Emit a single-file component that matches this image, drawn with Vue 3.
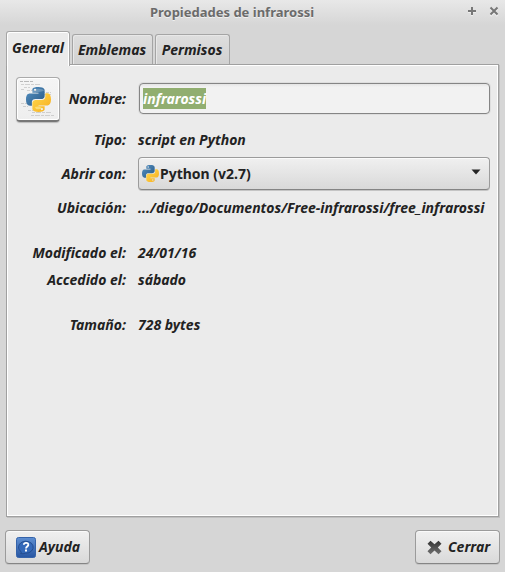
<script setup>
const tabs = ['General', 'Emblemas', 'Permisos']
const details = [
  { id: 'location', label: 'Ubicación:', value: '.../diego/Documentos/Free-infrarossi/free_infrarossi' },
  { id: 'modified', label: 'Modificado el:', value: '24/01/16' },
  { id: 'accessed', label: 'Accedido el:', value: 'sábado' },
  { id: 'size', label: 'Tamaño:', value: '728 bytes' },
]
</script>

<template>
  <svg class="defs" width="0" height="0">
    <defs>
      <linearGradient id="pyBlue" x1="0" y1="0" x2="1" y2="1">
        <stop offset="0" stop-color="#5593c5" /><stop offset="1" stop-color="#285783" />
      </linearGradient>
      <linearGradient id="pyYellow" x1="0" y1="0" x2="1" y2="1">
        <stop offset="0" stop-color="#ffda50" /><stop offset="1" stop-color="#f7ad1d" />
      </linearGradient>
      <symbol id="python" viewBox="0 0 110 110">
        <path fill="url(#pyBlue)" d="M54 0C26 0 28 12 28 12v13h27v4H17S0 27 0 55s16 27 16 27h10V68s-1-15 15-15h26s15 0 15-15V15S84 0 54 0zM40 8a5 5 0 1 1 0 10 5 5 0 0 1 0-10z" />
        <path fill="url(#pyYellow)" d="M56 110c28 0 26-12 26-12V85H55v-4h38s17 2 17-26-16-27-16-27H85v14s1 15-15 15H43s-15 0-15 15v23s-2 15 28 15zM70 102a5 5 0 1 1 0-10 5 5 0 0 1 0 10z" />
      </symbol>
    </defs>
  </svg>
  <main class="window">
    <header class="titlebar">
      <h1>Propiedades de infrarossi</h1>
      <svg class="controls" width="32" height="12" viewBox="0 0 32 12">
        <path d="M1 7h8M5 3v8M23.5 4l7 7M30.5 4l-7 7" class="shine" />
        <path d="M1 6h8M5 2v8M23.5 2.5l7 7M30.5 2.5l-7 7" />
      </svg>
    </header>
    <nav class="tabs">
      <button v-for="(tab, i) in tabs" :key="tab" class="tab" :class="{ active: i === 0 }"><span>{{ tab }}</span></button>
    </nav>
    <section class="panel">
      <div class="name-row">
        <div class="file-icon">
          <svg width="44" height="44" viewBox="0 0 44 44">
            <g stroke="#aaa" stroke-width=".8" opacity=".6">
              <path d="M4 4.5h13" stroke="#777" stroke-dasharray="3 1 5 1" />
              <path d="M5 7.5h19M8 10.5h6M11 13.5h14M20 15.5h15M22 17.5h13M5 12.5h3M5 26.5h8M7 29.5h5M12 33.5h7M16 35.5h20M15 38.5h24" stroke-dasharray="3 1 5 1" />
            </g>
            <use href="#python" x="10" y="10" width="25" height="25" />
            <path d="M14.5 15.5q2-4 8-3.8 5 0 5.5 2-5 2-13.5 1.800z" fill="#fff" opacity=".22" />
            <path d="M19 30q4-1.500 7 1-2 2-6 1z" fill="#fff4a8" opacity=".55" />
          </svg>
        </div>
        <label class="label">Nombre:</label>
        <div class="entry"><span class="selection">infrarossi</span></div>
      </div>
      <div class="row type"><span class="label">Tipo:</span><span class="value">script en Python</span></div>
      <div class="row open">
        <span class="label">Abrir con:</span>
        <button class="combo">
          <svg width="17" height="17"><use href="#python" width="17" height="17" /></svg>
          <span class="app">Python (v2.7)</span>
          <svg class="arrow" width="10" height="6" viewBox="0 0 10 6"><path d="M.5.5h9L5 5.5z" fill="#252525" /></svg>
        </button>
      </div>
      <div v-for="row in details" :key="row.id" class="row" :class="row.id">
        <span class="label">{{ row.label }}</span><span class="value">{{ row.value }}</span>
      </div>
    </section>
    <footer class="actions">
      <button class="action help">
        <svg width="20" height="21" viewBox="0 0 20 21">
          <defs><linearGradient id="help" x1="0" y1="0" x2="0" y2="1"><stop offset="0" stop-color="#5e8fd2" /><stop offset="1" stop-color="#2856a2" /></linearGradient></defs>
          <rect x=".5" y=".5" width="19" height="20" rx="2" fill="url(#help)" stroke="#3563aa" />
          <path d="M4.500 16.500Q5.500 16 5.200 14.800A7.300 6 0 1 1 9.500 16.200Q7 17.200 4.500 16.500z" fill="#3469b9" stroke="#234d91" />
          <path d="M7.800 7.700C8 5.100 12.700 5.200 12.300 8c-.2 1.400-2.300 1.600-2.300 3.400" fill="none" stroke="#fff" stroke-width="1.800" />
          <rect x="9" y="12.500" width="2" height="2" fill="#fff" />
        </svg>
        <span>Ayuda</span>
      </button>
      <button class="action close">
        <svg width="15" height="15" viewBox="0 0 15 15">
          <defs><linearGradient id="cross" x1="0" y1="0" x2="0" y2="1"><stop offset="0" stop-color="#333" /><stop offset="1" stop-color="#707070" /></linearGradient></defs>
          <path d="M3.500.7 7.500 4.200 11.500.7 14.500 3.700 10.800 7.400 14.500 11.200 11.500 14.200 7.500 10.600 3.500 14.200.5 11.200 4.200 7.400.5 3.700z" fill="url(#cross)" />
        </svg>
        <span>Cerrar</span>
      </button>
    </footer>
  </main>
</template>

<style>
body { margin: 0; background: #d6d6d6; }
</style>

<style scoped>
* { box-sizing: border-box; }
.defs { position: absolute; }
.window {
  width: 505px; height: 572px; padding: 0 6px;
  display: flex; flex-direction: column;
  background: linear-gradient(#e8e8e8, #d6d6d6 25px);
  font: italic bold 14px/20px "Noto Sans", sans-serif;
  color: #222; white-space: nowrap; overflow: hidden;
}
button { font: inherit; color: inherit; padding: 0; margin: 0; border: 0; background: none; }
span { display: block; }
.titlebar { height: 31px; flex: none; display: grid; grid-template-columns: 32px 1fr 32px; padding-top: 3px; }
h1 { grid-column: 2; margin: -1px 0 0 -41px; text-align: center; font: bold 13px/20px "Noto Sans", sans-serif; color: #6b6b6b; text-shadow: 0 1px #f0f0f0; }
.controls { margin: 2px 0 0; fill: none; stroke: #777; stroke-width: 2; }
.controls .shine { stroke: #eee; }
.tabs { height: 33px; flex: none; display: flex; align-items: flex-end; gap: 2px; }
.tab {
  height: 30px; width: 75px; display: flex; justify-content: center; align-items: flex-start; padding: 5px 1px 0 0;
  border: 1px solid #a5a5a5; border-bottom: 0; border-radius: 3px 3px 0 0;
  background: linear-gradient(#dedede, #d1d1d1); box-shadow: inset 1px 1px #e8e8e8;
}
.tab:nth-child(2) { width: 81px; }
.tab.active {
  z-index: 1; width: 64px; height: 35px; margin-bottom: -2px; padding: 6px 0 0;
  background: #ebebeb; box-shadow: inset 1px 1px #fff, inset -1px 0 #fff;
}
.panel { height: 453px; flex: none; padding: 12px 8px 0 9px; border: 1px solid #a0a0a0; background: #ebebeb; box-shadow: inset 0 0 0 1px #fff, 1px 1px #bfbfbf; }
.name-row { display: flex; align-items: flex-start; height: 45px; }
.file-icon { width: 44px; height: 45px; border: 1px solid #aaa; border-bottom: 2px solid #777; border-radius: 4px; background: linear-gradient(#f5f5f5, #eee); box-shadow: inset 0 0 0 1px #fff, 0 1px 1px #bbb; overflow: hidden; }
.file-icon svg { display: block; margin: -1px; }
.name-row .label { width: 66px; margin-top: 12px; }
.label { text-align: right; }
.entry { flex: 1; margin: 6px 0 0 13px; height: 31px; border: 1px solid #858585; border-radius: 4px; background: linear-gradient(#e4e4e4, #f2f2f2 3px); padding: 4px 3px; box-shadow: 0 0 0 1px #dedede; }
.selection { width: 63px; height: 21px; line-height: 21px; background: #91ae70; color: #fff; }
.row { display: grid; grid-template-columns: 110px 1fr; column-gap: 12px; height: 20px; align-items: center; }
.type { margin-top: 8px; }
.open { margin-top: 6px; height: 35px; }
.location { margin-top: 7px; }
.modified { margin-top: 25px; }
.accessed { margin-top: 7px; }
.size { margin-top: 25px; }
.combo, .action { border: 1px solid #9b9b9b; border-bottom-color: #858585; border-radius: 4px; background: linear-gradient(#f0f0f0, #d9d9d9); box-shadow: inset 0 1px #fafafa, 0 1px #c4c4c4; }
.combo { height: 33px; display: flex; align-items: center; padding: 0 8px 0 3px; font-style: normal; }
.combo .app { margin-left: 1px; }
.arrow { margin-left: auto; margin-top: -3px; }
.actions { display: flex; justify-content: space-between; margin: 13px -1px 0; }
.action { height: 34px; display: flex; align-items: center; }
.help { width: 85px; padding-left: 10px; gap: 3px; }
.close { width: 85px; padding-left: 11px; gap: 6px; }
</style>
